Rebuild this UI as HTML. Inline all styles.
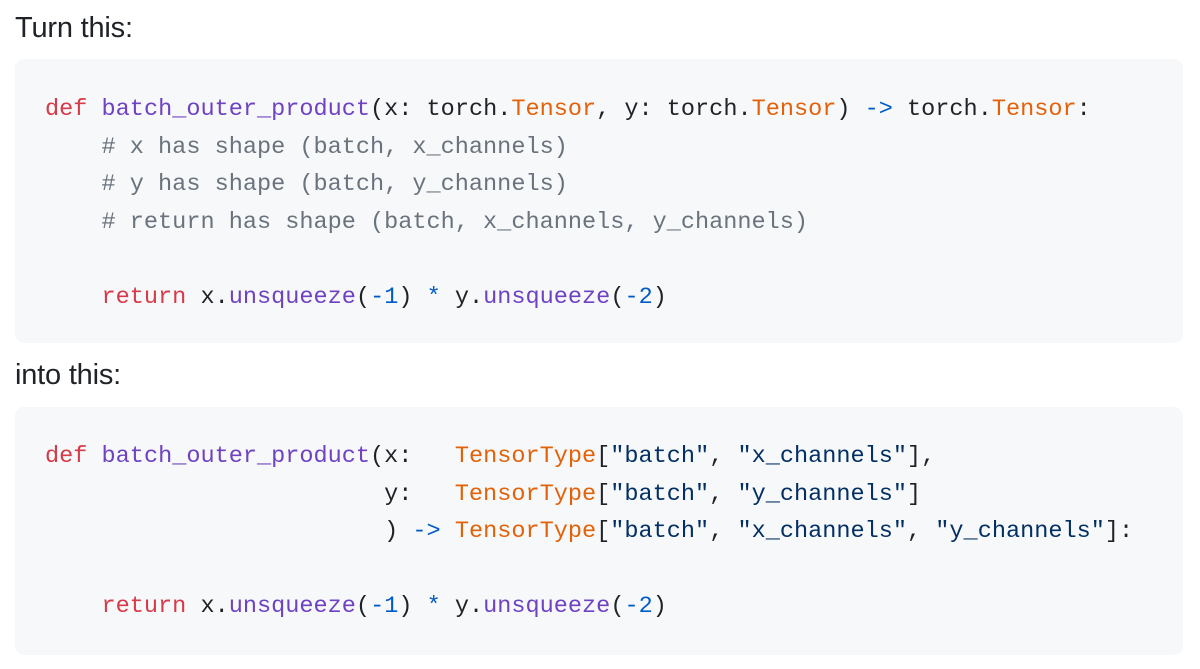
<!DOCTYPE html>
<html><head><meta charset="utf-8"><style>
body{margin:0;width:1200px;height:669px;background:#fff;position:relative;overflow:hidden}
.t{position:absolute;left:15px;font-family:"Liberation Sans",sans-serif;font-size:29px;color:#1f2328;letter-spacing:-0.2px}
.box{position:absolute;left:15px;width:1168px;background:#f6f8fa;border-radius:9px}
pre{position:absolute;left:45px;margin:0;font-family:"Liberation Mono",monospace;font-size:23.55px;line-height:37.5px;color:#1f2328}
.k{color:#d73a49}.f{color:#6f42c1}.c{color:#6a737d}.o{color:#e36209}.b{color:#005cc5}.s{color:#032f62}
</style></head><body>
<div class="t" style="top:12px">Turn this:</div>
<div class="box" style="top:59px;height:284px"></div>
<pre style="top:91px"><span class="k">def</span> <span class="f">batch_outer_product</span>(x: torch.<span class="o">Tensor</span>, y: torch.<span class="o">Tensor</span>) <span class="b">-&gt;</span> torch.<span class="o">Tensor</span>:
    <span class="c"># x has shape (batch, x_channels)</span>
    <span class="c"># y has shape (batch, y_channels)</span>
    <span class="c"># return has shape (batch, x_channels, y_channels)</span>

    <span class="k">return</span> x.<span class="f">unsqueeze</span>(<span class="b">-1</span>) <span class="b">*</span> y.<span class="f">unsqueeze</span>(<span class="b">-2</span>)</pre>
<div class="t" style="top:359px">into this:</div>
<div class="box" style="top:407px;height:248px"></div>
<pre style="top:438px"><span class="k">def</span> <span class="f">batch_outer_product</span>(x:   <span class="o">TensorType</span>[<span class="s">"batch"</span>, <span class="s">"x_channels"</span>],
                        y:   <span class="o">TensorType</span>[<span class="s">"batch"</span>, <span class="s">"y_channels"</span>]
                        ) <span class="b">-&gt;</span> <span class="o">TensorType</span>[<span class="s">"batch"</span>, <span class="s">"x_channels"</span>, <span class="s">"y_channels"</span>]:

    <span class="k">return</span> x.<span class="f">unsqueeze</span>(<span class="b">-1</span>) <span class="b">*</span> y.<span class="f">unsqueeze</span>(<span class="b">-2</span>)</pre>
</body></html>
